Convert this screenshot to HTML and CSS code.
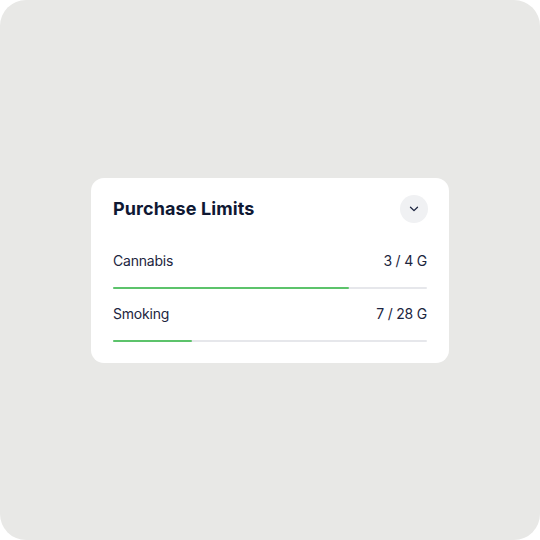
FILE: index.html
```html
<!DOCTYPE html>
<html>
<head>
<meta charset="utf-8">
<link rel="stylesheet" href="styles.css">
</head>
<body>
<div class="canvas">
  <div class="card">
    <div class="header">
      <h2 class="title">Purchase Limits</h2>
      <button class="toggle" aria-label="Collapse">
        <svg width="10" height="6" viewBox="0 0 10 6"><path d="M1.5 1.2 L5 4.6 L8.5 1.2" fill="none" stroke="#1c2540" stroke-width="1.3" stroke-linecap="round" stroke-linejoin="round"/></svg>
      </button>
    </div>
    <div class="rows">
      <div class="row">
        <div class="row-text"><span>Cannabis</span><span>3 / 4 G</span></div>
        <div class="track"><div class="fill" style="width:75%"></div></div>
      </div>
      <div class="row">
        <div class="row-text"><span>Smoking</span><span>7 / 28 G</span></div>
        <div class="track"><div class="fill" style="width:25%"></div></div>
      </div>
    </div>
  </div>
</div>
</body>
</html>
```
FILE: styles.css
```css
* { box-sizing: border-box; }
html, body { margin: 0; padding: 0; background: #ffffff; }
body { font-family: Inter, "Open Sans", "Liberation Sans", sans-serif; }
.canvas {
  width: 540px;
  height: 540px;
  background: #e8e8e6;
  border-radius: 26px;
  display: flex;
  align-items: center;
  justify-content: center;
}
.card {
  width: 358px;
  background: #ffffff;
  border-radius: 13px;
  padding: 17px 22px 21px 22px;
}
.header {
  display: flex;
  align-items: center;
  justify-content: space-between;
  height: 28px;
}
.title {
  margin: 0;
  font-size: 18px;
  font-weight: 700;
  color: #0f1833;
  letter-spacing: 0.1px;
}
.toggle {
  width: 28px;
  height: 28px;
  border-radius: 50%;
  border: none;
  background: #f0f1f3;
  display: flex;
  align-items: center;
  justify-content: center;
  padding: 0;
  margin-right: -1px;
}
.rows {
  margin-top: 28px;
  display: flex;
  flex-direction: column;
  gap: 15px;
}
.row {
  display: flex;
  flex-direction: column;
  gap: 16px;
}
.row-text {
  display: flex;
  justify-content: space-between;
  font-size: 14px;
  line-height: 20px;
  letter-spacing: -0.2px;
  color: #1c2540;
}
.track {
  height: 2px;
  background: #e6e7eb;
  border-radius: 1px;
}
.fill {
  height: 100%;
  background: #5cc36b;
  border-radius: 1px;
}
```
